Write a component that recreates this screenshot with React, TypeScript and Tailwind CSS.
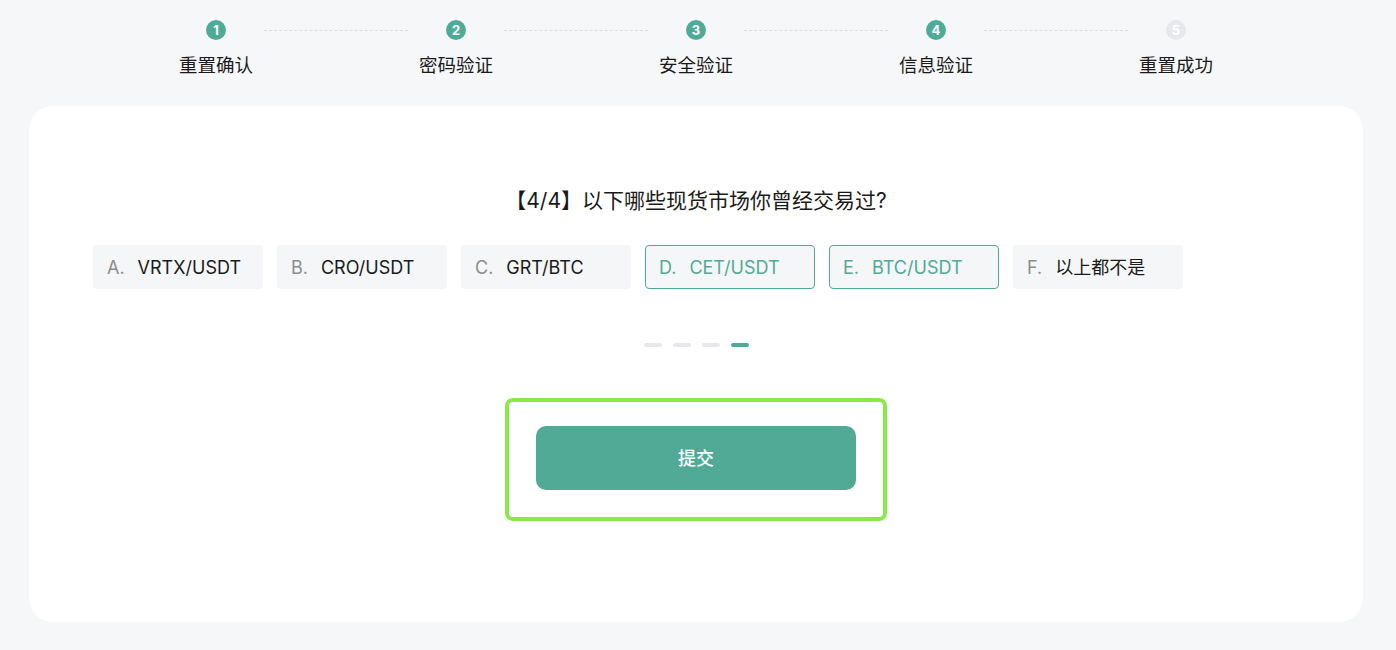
import { type FC } from 'react';

const steps = ['重置确认', '密码验证', '安全验证', '信息验证', '重置成功'];

const options = [
  { key: 'A', label: 'VRTX/USDT', selected: false },
  { key: 'B', label: 'CRO/USDT', selected: false },
  { key: 'C', label: 'GRT/BTC', selected: false },
  { key: 'D', label: 'CET/USDT', selected: true },
  { key: 'E', label: 'BTC/USDT', selected: true },
  { key: 'F', label: '以上都不是', selected: false },
];

const current = 4;

const Stepper: FC = () => (
  <div className="ml-[96px] w-[1200px] pt-[20px]">
    <div className="flex items-center pl-[110px]">
      {steps.map((_, i) => (
        <div key={i} className="flex items-center">
          <div
            className={`flex h-[20px] w-[20px] items-center justify-center rounded-full text-[13px] font-bold leading-none text-white ${
              i + 1 <= current ? 'bg-[#4fab97]' : 'bg-[#e6e8eb]'
            }`}
          >
            {i + 1}
          </div>
          {i < steps.length - 1 && (
            <div className="mx-[38px] w-[144px] border-t border-dashed border-[#d9dde2]" />
          )}
        </div>
      ))}
    </div>
    <div className="mt-[15px] grid grid-cols-5">
      {steps.map((s) => (
        <div key={s} className="text-center text-[18.5px] leading-[20px] text-[#1a1a1a]">
          {s}
        </div>
      ))}
    </div>
  </div>
);

const App: FC = () => {
  return (
    <div
      className="min-h-[650px] bg-[#f6f7f9] pb-[28px]"
      style={{ fontFamily: 'Inter, "Noto Sans CJK SC", sans-serif' }}
    >
      <Stepper />
      <div className="ml-[29px] mr-[33px] mt-[31px] h-[516px] rounded-[24px] bg-white px-[64px] pt-[82px]">
        <div className="text-center text-[21px] leading-[26px] text-[#1a1a1a]">
          【4/4】以下哪些现货市场你曾经交易过?
        </div>
        <div className="mt-[31px] flex gap-[14px]">
          {options.map((o) => (
            <div
              key={o.key}
              className={`flex h-[44px] w-[170px] items-center rounded-[4px] border bg-[#f5f6f8] px-[13px] text-[18px] ${
                o.selected ? 'border-[#4fab97] text-[#4fab97]' : 'border-transparent text-[#1a1a1a]'
              }`}
            >
              <span className={`mr-[13px] ${o.selected ? 'text-[#4fab97]' : 'text-[#8c8c8c]'}`}>{o.key}.</span>
              <span>{o.label}</span>
            </div>
          ))}
        </div>
        <div className="mt-[54px] flex justify-center gap-[11px]">
          {[0, 1, 2, 3].map((i) => (
            <div
              key={i}
              className={`h-[4px] w-[18px] rounded-full ${i === 3 ? 'bg-[#4fab97]' : 'bg-[#e6e8eb]'}`}
            />
          ))}
        </div>
        <div className="mt-[51px] flex justify-center">
          <div className="rounded-[8px] border-[4px] border-[#8ae94a] px-[27px] pb-[27px] pt-[24px]">
            <button className="flex h-[64px] w-[320px] items-center justify-center rounded-[10px] bg-[#50aa96] text-[18px] font-medium text-white">
              提交
            </button>
          </div>
        </div>
      </div>
    </div>
  );
};

export default App;
